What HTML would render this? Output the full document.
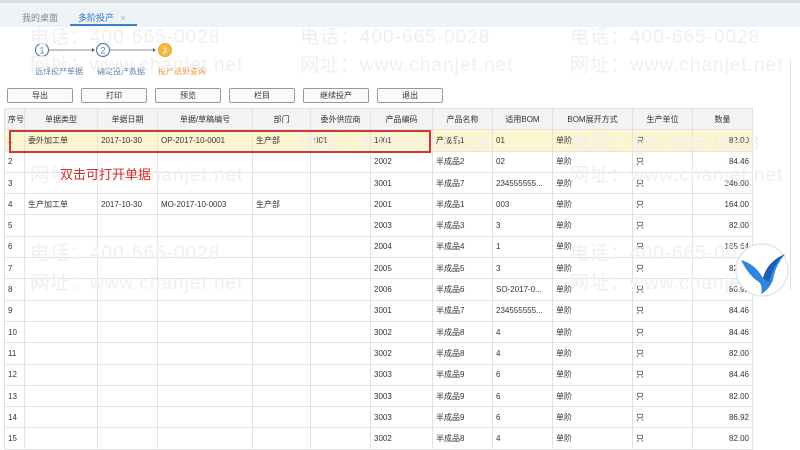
<!DOCTYPE html>
<html><head><meta charset="utf-8"><style>
*{margin:0;padding:0;box-sizing:border-box}
body{width:800px;height:438px;overflow:hidden;background:#fff;font-family:"Liberation Sans","Noto Sans CJK SC",sans-serif;font-size:9px;color:#333;position:relative}
.a{position:absolute}
.wm{position:absolute;color:#efefef;font-size:19px;letter-spacing:1px;white-space:nowrap;z-index:5;pointer-events:none}
.btn{position:absolute;top:88px;width:66px;height:15px;border:1px solid #999;border-radius:2px;background:#fafafa;text-align:center;line-height:13px;font-size:8px}
table{position:absolute;left:4px;top:108px;border-collapse:collapse;table-layout:fixed;width:748px}
td,th{border:1px solid #e2e2e2;height:21.3px;padding:0 3px;white-space:nowrap;overflow:hidden;font-size:8px;font-weight:normal}
th{background:#f3f3f3;text-align:center}
tr.s td{background:#fdf5cf}
.r{text-align:right}
</style></head><body>
<div class="a" style="left:0;top:0;width:800px;height:3px;background:#ddd"></div>
<div class="a" style="left:0;top:3px;width:800px;height:24px;background:#eef3f8"></div>
<div class="a" style="left:22px;top:11px;color:#888">我的桌面</div>
<div class="a" style="left:78px;top:11px;color:#2a6fc0">多阶投产 <span style="color:#aaa;margin-left:4px">×</span></div>
<div class="a" style="left:70px;top:24px;width:67px;height:2px;background:#3a7fd0"></div>

<svg class="a" style="left:30px;top:40px" width="160" height="22">
<circle cx="12" cy="10" r="6.5" fill="#fff" stroke="#5a7ea8" stroke-width="1.2"/><text x="9.5" y="13.5" font-size="9" fill="#5a7ea8">1</text>
<line x1="19" y1="10" x2="64" y2="10" stroke="#666" stroke-width="0.8"/><path d="M62 8l3 2-3 2z" fill="#666"/>
<circle cx="73" cy="10" r="6.5" fill="#fff" stroke="#5a7ea8" stroke-width="1.2"/><text x="70.5" y="13.5" font-size="9" fill="#5a7ea8">2</text>
<line x1="80" y1="10" x2="125" y2="10" stroke="#666" stroke-width="0.8"/><path d="M123 8l3 2-3 2z" fill="#666"/>
<circle cx="135" cy="10" r="6.5" fill="#f5b942" stroke="#e9a62a"/><text x="132.5" y="13.5" font-size="8" fill="#fff">3</text>
</svg>
<div class="a" style="left:35px;top:66px;color:#5a7ea8;font-size:8px">选择投产单据</div>
<div class="a" style="left:97px;top:66px;color:#5a7ea8;font-size:8px">确定投产数据</div>
<div class="a" style="left:158px;top:66px;color:#e8942a;font-size:8px">投产结果查询</div>

<div class="btn" style="left:7px">导出</div>
<div class="btn" style="left:81px">打印</div>
<div class="btn" style="left:155px">预览</div>
<div class="btn" style="left:229px">栏目</div>
<div class="btn" style="left:303px">继续投产</div>
<div class="btn" style="left:377px">退出</div>

<table>
<colgroup><col style="width:20px"><col style="width:73px"><col style="width:60px"><col style="width:95px"><col style="width:58px"><col style="width:60px"><col style="width:62px"><col style="width:60px"><col style="width:60px"><col style="width:80px"><col style="width:60px"><col style="width:60px"></colgroup>
<tr><th>序号</th><th>单据类型</th><th>单据日期</th><th>单据/草稿编号</th><th>部门</th><th>委外供应商</th><th>产品编码</th><th>产品名称</th><th>适用BOM</th><th>BOM展开方式</th><th>生产单位</th><th>数量</th></tr>
<tr class="s"><td>1</td><td>委外加工单</td><td>2017-10-30</td><td>OP-2017-10-0001</td><td>生产部</td><td>001</td><td>1001</td><td>产成品1</td><td>01</td><td>单阶</td><td>只</td><td class="r">82.00</td></tr>
<tr><td>2</td><td></td><td></td><td></td><td></td><td></td><td>2002</td><td>半成品2</td><td>02</td><td>单阶</td><td>只</td><td class="r">84.46</td></tr>
<tr><td>3</td><td></td><td></td><td></td><td></td><td></td><td>3001</td><td>半成品7</td><td>234555555...</td><td>单阶</td><td>只</td><td class="r">246.00</td></tr>
<tr><td>4</td><td>生产加工单</td><td>2017-10-30</td><td>MO-2017-10-0003</td><td>生产部</td><td></td><td>2001</td><td>半成品1</td><td>003</td><td>单阶</td><td>只</td><td class="r">164.00</td></tr>
<tr><td>5</td><td></td><td></td><td></td><td></td><td></td><td>2003</td><td>半成品3</td><td>3</td><td>单阶</td><td>只</td><td class="r">82.00</td></tr>
<tr><td>6</td><td></td><td></td><td></td><td></td><td></td><td>2004</td><td>半成品4</td><td>1</td><td>单阶</td><td>只</td><td class="r">165.64</td></tr>
<tr><td>7</td><td></td><td></td><td></td><td></td><td></td><td>2005</td><td>半成品5</td><td>3</td><td>单阶</td><td>只</td><td class="r">82.00</td></tr>
<tr><td>8</td><td></td><td></td><td></td><td></td><td></td><td>2006</td><td>半成品6</td><td>SO-2017-0...</td><td>单阶</td><td>只</td><td class="r">86.92</td></tr>
<tr><td>9</td><td></td><td></td><td></td><td></td><td></td><td>3001</td><td>半成品7</td><td>234555555...</td><td>单阶</td><td>只</td><td class="r">84.46</td></tr>
<tr><td>10</td><td></td><td></td><td></td><td></td><td></td><td>3002</td><td>半成品8</td><td>4</td><td>单阶</td><td>只</td><td class="r">84.46</td></tr>
<tr><td>11</td><td></td><td></td><td></td><td></td><td></td><td>3002</td><td>半成品8</td><td>4</td><td>单阶</td><td>只</td><td class="r">82.00</td></tr>
<tr><td>12</td><td></td><td></td><td></td><td></td><td></td><td>3003</td><td>半成品9</td><td>6</td><td>单阶</td><td>只</td><td class="r">84.46</td></tr>
<tr><td>13</td><td></td><td></td><td></td><td></td><td></td><td>3003</td><td>半成品9</td><td>6</td><td>单阶</td><td>只</td><td class="r">82.00</td></tr>
<tr><td>14</td><td></td><td></td><td></td><td></td><td></td><td>3003</td><td>半成品9</td><td>6</td><td>单阶</td><td>只</td><td class="r">86.92</td></tr>
<tr><td>15</td><td></td><td></td><td></td><td></td><td></td><td>3002</td><td>半成品8</td><td>4</td><td>单阶</td><td>只</td><td class="r">82.00</td></tr>
</table>
<div class="a" style="left:790px;top:60px;width:1px;height:230px;background:#ddd"></div>

<div class="a" style="left:9px;top:130px;width:422px;height:23px;border:2px solid #c9393a;z-index:6"></div>
<div class="a" style="left:60px;top:164px;color:#d0302e;font-size:13px;z-index:6">双击可打开单据</div>

<div class="wm" style="left:30px;top:22px">电话：400-665-0028</div>
<div class="wm" style="left:30px;top:50px">网址：www.chanjet.net</div>
<div class="wm" style="left:300px;top:22px">电话：400-665-0028</div>
<div class="wm" style="left:300px;top:50px">网址：www.chanjet.net</div>
<div class="wm" style="left:570px;top:22px">电话：400-665-0028</div>
<div class="wm" style="left:570px;top:50px">网址：www.chanjet.net</div>
<div class="wm" style="left:300px;top:128px">电话：400-665-0028</div>
<div class="wm" style="left:570px;top:128px">电话：400-665-0028</div>
<div class="wm" style="left:30px;top:160px">网址：www.chanjet.net</div>
<div class="wm" style="left:570px;top:160px">网址：www.chanjet.net</div>
<div class="wm" style="left:30px;top:238px">电话：400-665-0028</div>
<div class="wm" style="left:570px;top:238px">电话：400-665-0028</div>
<div class="wm" style="left:30px;top:268px">网址：www.chanjet.net</div>
<div class="wm" style="left:570px;top:268px">网址：www.chanjet.net</div>

<svg class="a" style="left:733px;top:242px;z-index:7" width="58" height="56">
<circle cx="29" cy="28" r="26" fill="#fff" stroke="#e0e6ee" stroke-width="1.5"/>
<path d="M8 18 Q22 22 30 36 Q34 20 52 12 Q42 24 40 38 Q36 48 28 52 Q30 44 26 40 Q16 34 8 18z" fill="#2e86de"/>
<path d="M30 36 Q34 20 52 12 Q40 22 36 40z" fill="#1c5fb0"/>
</svg>
</body></html>
